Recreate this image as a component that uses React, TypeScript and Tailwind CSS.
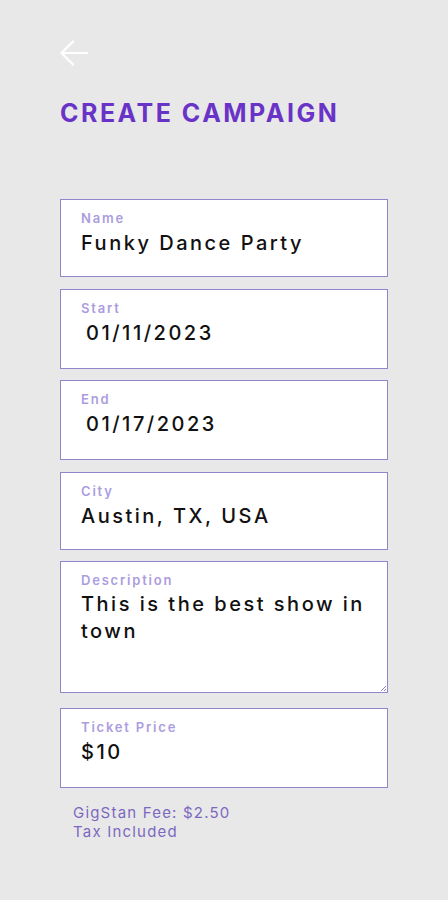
import React from 'react';

interface FieldProps {
    label: string;
    value: string;
    height: string;
    className?: string;
    indent?: boolean;
    multiline?: boolean;
}

const Field: React.FC<FieldProps> = ({ label, value, height, className = '', indent, multiline }) => (
    <div className={`relative bg-white border-[1.5px] border-[#9484cc] pl-5 pr-2 pt-[10px] ${height} ${className}`}>
        <div className="text-[13px] leading-4 font-semibold text-[#ab9ddf] tracking-[1.8px]">{label}</div>
        <div
            className={`mt-[3px] text-[20px] font-medium text-[#111] tracking-[2.5px] ${multiline ? 'leading-[27px]' : 'leading-7'} ${indent ? 'pl-[5px]' : ''}`}
        >
            {value}
        </div>
        {multiline && (
            <svg className="absolute right-0 bottom-0" width="8" height="8" viewBox="0 0 8 8">
                <path d="M7 2 L2 7 M7 5 L5 7" stroke="#9484cc" strokeWidth="1" />
            </svg>
        )}
    </div>
);

export default function App() {
    return (
        <div
            className="min-h-[900px] w-full bg-[#e8e8e8] px-[60px]"
            style={{ fontFamily: 'Inter, "Noto Sans", sans-serif' }}
        >
            <div className="pt-[40px]">
                <svg width="28" height="26" viewBox="0 0 28 26" fill="none">
                    <path d="M27 13 H2 M13 1.5 L1.5 13 L13 24.5" stroke="#ffffff" strokeWidth="2.2" strokeLinecap="round" strokeLinejoin="round" />
                </svg>
            </div>
            <h1 className="mt-[32px] text-[25px] leading-[30px] font-bold text-[#6a33c7] tracking-[2.5px]">
                CREATE CAMPAIGN
            </h1>

            <div className="mt-[71px] flex flex-col">
                <Field label="Name" value="Funky Dance Party" height="h-[78px]" />
                <Field label="Start" value="01/11/2023" height="h-[80px]" className="mt-[12px]" indent />
                <Field label="End" value="01/17/2023" height="h-[80px]" className="mt-[11px]" indent />
                <Field label="City" value="Austin, TX, USA" height="h-[78px]" className="mt-[12px]" />
                <Field label="Description" value="This is the best show in town" height="h-[132px]" className="mt-[11px]" multiline />
                <Field label="Ticket Price" value="$10" height="h-[80px]" className="mt-[15px]" />
            </div>

            <div className="mt-[15px] pl-[13px] text-[15px] leading-[19px] text-[#7c68c0] tracking-[1.2px]">
                <div>GigStan Fee: $2.50</div>
                <div>Tax Included</div>
            </div>
        </div>
    );
}
